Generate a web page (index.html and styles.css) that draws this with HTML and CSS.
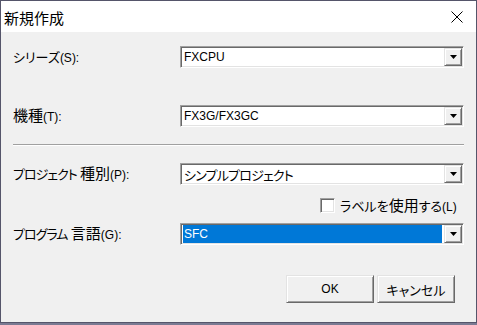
FILE: index.html
```html
<!DOCTYPE html>
<html lang="ja">
<head>
<meta charset="utf-8">
<title>新規作成</title>
<link rel="stylesheet" href="styles.css">
</head>
<body>
<div class="window">
  <div class="titlebar">
    <span class="title">新規作成</span>
    <svg class="close" width="12" height="12" viewBox="0 0 12 12"><path d="M0.5 0.5 L11.5 11.5 M11.5 0.5 L0.5 11.5" stroke="#000" stroke-width="1" fill="none"/></svg>
  </div>
  <div class="content">
    <div class="row">
      <span class="label"><span class="kana">シリーズ</span>(S):</span>
      <div class="combo">
        <div class="field"><span class="value">FXCPU</span></div>
        <div class="drop"><svg width="7" height="4" viewBox="0 0 7 4"><polygon points="0,0 7,0 3.5,4" fill="#000"/></svg></div>
      </div>
    </div>
    <div class="row row-model">
      <span class="label"><span class="kanji">機種</span>(T):</span>
      <div class="combo">
        <div class="field"><span class="value">FX3G/FX3GC</span></div>
        <div class="drop"><svg width="7" height="4" viewBox="0 0 7 4"><polygon points="0,0 7,0 3.5,4" fill="#000"/></svg></div>
      </div>
    </div>
    <div class="separator"></div>
    <div class="row">
      <span class="label"><span class="kana tight">プロジェクト</span> <span class="kanji">種別</span>(P):</span>
      <div class="combo">
        <div class="field"><span class="value"><span class="kana">シンプルプロジェクト</span></span></div>
        <div class="drop"><svg width="7" height="4" viewBox="0 0 7 4"><polygon points="0,0 7,0 3.5,4" fill="#000"/></svg></div>
      </div>
    </div>
    <div class="checkrow">
      <span class="checkbox"></span>
      <span class="checklabel"><span class="kana">ラベルを</span><span class="kanji">使用</span><span class="kana">する</span>(L)</span>
    </div>
    <div class="row">
      <span class="label"><span class="kana tight">プログラム</span> <span class="kanji">言語</span>(G):</span>
      <div class="combo">
        <div class="field"><span class="value selected">SFC</span></div>
        <div class="drop"><svg width="7" height="4" viewBox="0 0 7 4"><polygon points="0,0 7,0 3.5,4" fill="#000"/></svg></div>
      </div>
    </div>
    <div class="buttons">
      <button class="btn btn-ok">OK</button>
      <button class="btn btn-cancel"><span class="kana">キャンセル</span></button>
    </div>
  </div>
</div>
</body>
</html>
```

FILE: styles.css
```css
* { box-sizing: border-box; }
html, body { margin: 0; padding: 0; }
body {
  width: 477px;
  height: 325px;
  background: #7a7a92;
  font-family: "Liberation Sans", Arial, sans-serif;
  font-size: 12px;
  color: #000;
  overflow: hidden;
}
.kana {
  font-family: "Noto Sans CJK JP", sans-serif;
  font-size: 13px;
  font-feature-settings: "palt" 1;
}
.kana.tight { letter-spacing: -1px; }
.kanji {
  font-family: "Noto Sans CJK JP", sans-serif;
  font-size: 15px;
}
.window {
  width: 477px;
  height: 323px;
  border: 1px solid #55556a;
  background: #f0f0f0;
  display: flex;
  flex-direction: column;
}
.titlebar {
  height: 31px;
  flex: none;
  background: #fff;
  display: flex;
  align-items: center;
  justify-content: space-between;
  padding: 0 13px 0 3px;
}
.title {
  font-family: "Noto Sans CJK JP", sans-serif;
  font-size: 15px;
  line-height: 1;
  margin-top: 1px;
}
.close { display: block; margin-top: 1px; }
.content {
  display: flex;
  flex-direction: column;
  padding: 14px 12px 0 12px;
}
.row {
  display: flex;
  align-items: center;
  height: 22px;
}
.row-model { margin-top: 37px; }
.label {
  width: 167px;
  white-space: nowrap;
  line-height: 22px;
}
.combo {
  width: 284px;
  height: 22px;
  display: flex;
  background: #fff;
  padding: 1px;
  border: 1px solid;
  border-color: #a0a0a0 #fff #fff #a0a0a0;
  box-shadow: inset 1px 1px 0 #696969, inset -1px -1px 0 #e3e3e3;
}
.field {
  flex: 1;
  display: flex;
  padding: 0 2px 0 1px;
  min-width: 0;
}
.value {
  flex: 1;
  display: flex;
  align-items: center;
  padding-left: 1px;
  white-space: nowrap;
  line-height: 1;
}
.value .kana { letter-spacing: -0.8px; }
.value.selected {
  background: #0078d7;
  color: #fff;
}
.drop {
  width: 18px;
  flex: none;
  display: flex;
  align-items: center;
  justify-content: center;
  background: #f0f0f0;
  border: 1px solid;
  border-color: #e3e3e3 #696969 #696969 #e3e3e3;
  box-shadow: inset 1px 1px 0 #fff, inset -1px -1px 0 #a0a0a0;
}
.drop svg { display: block; }
.separator {
  height: 2px;
  margin: 17px 0;
  border-top: 1px solid #a0a0a0;
  border-bottom: 1px solid #fff;
}
.checkrow {
  display: flex;
  align-items: center;
  margin-top: 13px;
  padding-left: 307px;
  height: 15px;
}
.checkbox {
  width: 15px;
  height: 15px;
  flex: none;
  background: #fff;
  border: 1px solid;
  border-color: #a0a0a0 #fff #fff #a0a0a0;
  box-shadow: inset 1px 1px 0 #696969, inset -1px -1px 0 #e3e3e3;
}
.checklabel {
  margin-left: 5px;
  white-space: nowrap;
  line-height: 15px;
}
.checkrow + .row { margin-top: 10px; }
.buttons {
  display: flex;
  justify-content: flex-end;
  gap: 3px;
  margin-top: 30px;
  padding-right: 9px;
}
.btn {
  height: 28px;
  padding: 0;
  margin: 0;
  background: #f0f0f0;
  font-family: "Liberation Sans", Arial, sans-serif;
  font-size: 12px;
  color: #000;
  border: 1px solid;
  border-color: #e3e3e3 #696969 #696969 #e3e3e3;
  box-shadow: inset 1px 1px 0 #fff, inset -1px -1px 0 #a0a0a0;
  display: flex;
  align-items: center;
  justify-content: center;
}
.btn-ok { width: 88px; }
.btn-cancel { width: 78px; }
.btn .kana { line-height: 1; }
```
